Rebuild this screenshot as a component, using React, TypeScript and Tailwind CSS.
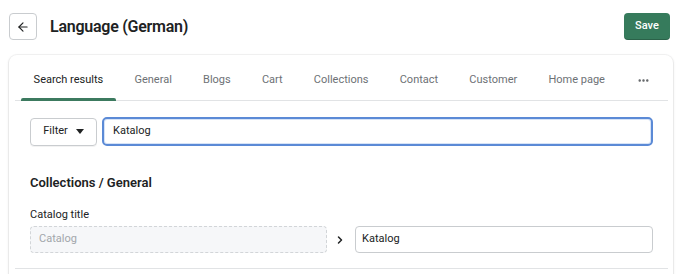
import { ArrowLeft, ChevronRight, MoreHorizontal } from "lucide-react"

const tabs = ["Search results", "General", "Blogs", "Cart", "Collections", "Contact", "Customer", "Home page"]

export default function App() {
  return (
    <div className="w-[690px] h-[274px] bg-white overflow-hidden font-['Roboto',sans-serif] text-[#202223]">
      <div className="flex items-center pl-[9px] pr-[20px] pt-[13px]">
        <button className="w-[28px] h-[27px] flex items-center justify-center border border-[#c9cccf] rounded-[4px]">
          <ArrowLeft className="w-[14px] h-[14px] text-[#202223]" strokeWidth={2} />
        </button>
        <h1 className="ml-[13px] text-[16px] font-semibold tracking-[-0.25px]">Language (German)</h1>
        <button className="ml-auto w-[46px] h-[27px] rounded-[4px] bg-[#367b5c] text-white text-[11px] font-medium shadow-[inset_0_-1px_0_rgba(0,0,0,0.2)]">
          Save
        </button>
      </div>

      <div className="ml-[9px] mr-[17px] mt-[15px] rounded-[8px] bg-white shadow-[0_0_0_1px_rgba(63,63,68,0.06),0_1px_3px_rgba(63,63,68,0.15)] pt-[5px]">
        <div className="ml-[6px] mr-[5px] border-b border-[#e1e3e5] flex pl-[3px]">
          {tabs.map((t, i) => (
            <div key={t} className="relative h-[40px] px-[15.6px] flex items-center whitespace-nowrap">
              <span className={`text-[11px] ${i === 0 ? "text-[#202223]" : "text-[#6d7175]"}`}>{t}</span>
              {i === 0 && <div className="absolute left-[3px] right-[3px] bottom-[-1px] h-[3px] rounded-t-[2px] bg-[#3c7a5f]" />}
            </div>
          ))}
          <div className="h-[40px] px-[16px] flex items-center">
            <MoreHorizontal className="w-[13px] h-[13px] text-[#5c5f62]" strokeWidth={2.5} />
          </div>
        </div>

        <div className="pl-[21px] pr-[20px] pt-[16px]">
          <div className="flex items-center gap-[5px]">
            <button className="w-[67px] h-[28px] flex items-center justify-center gap-[8px] border border-[#c9cccf] rounded-[4px] text-[11px] shadow-[0_1px_0_rgba(0,0,0,0.05)]">
              Filter
              <svg width="8" height="5" viewBox="0 0 8 5"><path d="M0 0h8L4 5z" fill="#202223" /></svg>
            </button>
            <div className="flex-1 h-[29px] flex items-center px-[9px] border-2 border-[#5b8ad6] rounded-[5px] shadow-[inset_0_0_0_1px_#d6e3f7] text-[11px]">
              Katalog
            </div>
          </div>

          <h2 className="mt-[27px] text-[13px] leading-[20px] font-semibold">Collections / General</h2>
          <div className="mt-[14px] text-[11px] leading-[16px]">Catalog title</div>
          <div className="mt-[3px] flex items-center">
            <div className="w-[297px] h-[27px] flex items-center px-[8px] border border-dashed border-[#d2d5d8] rounded-[4px] bg-[#f6f7f9] text-[11px] text-[#a2a6ab]">
              Catalog
            </div>
            <ChevronRight className="ml-[7px] w-[12px] h-[12px] text-[#202223]" strokeWidth={3} />
            <div className="ml-[9px] flex-1 h-[27px] flex items-center px-[6px] border border-[#c9cccf] rounded-[4px] text-[11px]">
              Katalog
            </div>
          </div>
        </div>
        <div className="ml-[6px] mr-[5px] mt-[15px] border-b border-[#e1e3e5]" />
        <div className="h-[20px]" />
      </div>
    </div>
  )
}
